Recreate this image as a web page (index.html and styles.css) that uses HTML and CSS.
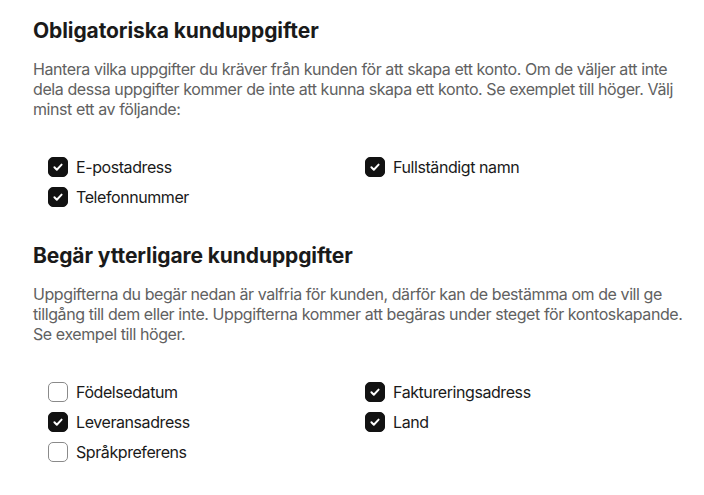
FILE: index.html
```html
<!DOCTYPE html>
<html lang="sv">
<head>
<meta charset="utf-8">
<link rel="stylesheet" href="styles.css">
</head>
<body>
<main class="page">
  <section class="section">
    <h2 class="title">Obligatoriska kunduppgifter</h2>
    <p class="desc">Hantera vilka uppgifter du kräver från kunden för att skapa ett konto. Om de väljer att inte dela dessa uppgifter kommer de inte att kunna skapa ett konto. Se exemplet till höger. Välj minst ett av följande:</p>
    <div class="options">
      <label class="option"><span class="box checked"><svg viewBox="0 0 20 20"><path d="M6 10.3l2.7 2.7 5.3-5.6"/></svg></span>E-postadress</label>
      <label class="option"><span class="box checked"><svg viewBox="0 0 20 20"><path d="M6 10.3l2.7 2.7 5.3-5.6"/></svg></span>Fullständigt namn</label>
      <label class="option"><span class="box checked"><svg viewBox="0 0 20 20"><path d="M6 10.3l2.7 2.7 5.3-5.6"/></svg></span>Telefonnummer</label>
    </div>
  </section>
  <section class="section">
    <h2 class="title">Begär ytterligare kunduppgifter</h2>
    <p class="desc">Uppgifterna du begär nedan är valfria för kunden, därför kan de bestämma om de vill ge tillgång till dem eller inte. Uppgifterna kommer att begäras under steget för kontoskapande. Se exempel till höger.</p>
    <div class="options">
      <label class="option"><span class="box"></span>Födelsedatum</label>
      <label class="option"><span class="box checked"><svg viewBox="0 0 20 20"><path d="M6 10.3l2.7 2.7 5.3-5.6"/></svg></span>Faktureringsadress</label>
      <label class="option"><span class="box checked"><svg viewBox="0 0 20 20"><path d="M6 10.3l2.7 2.7 5.3-5.6"/></svg></span>Leveransadress</label>
      <label class="option"><span class="box checked"><svg viewBox="0 0 20 20"><path d="M6 10.3l2.7 2.7 5.3-5.6"/></svg></span>Land</label>
      <label class="option"><span class="box"></span>Språkpreferens</label>
    </div>
  </section>
</main>
</body>
</html>
```

FILE: styles.css
```css
* { box-sizing: border-box; }
html, body { margin: 0; padding: 0; background: #ffffff; }
body {
  font-family: Inter, "Noto Sans", sans-serif;
  color: #1a1a1a;
}
.page {
  padding: 19px 6px 0 33px;
  display: flex;
  flex-direction: column;
  gap: 37px;
}
.title {
  margin: 0 0 16px;
  font-size: 21px;
  line-height: 24px;
  font-weight: 700;
  color: #1a1a1a;
  letter-spacing: -0.1px;
}
.desc {
  margin: 0 0 38px;
  font-size: 16px;
  line-height: 20px;
  color: #616161;
  letter-spacing: -0.42px;
}
.options {
  padding-left: 15px;
  display: grid;
  grid-template-columns: 317px 1fr;
  row-gap: 10px;
}
.option {
  display: flex;
  align-items: center;
  gap: 8px;
  font-size: 16px;
  line-height: 20px;
  color: #1a1a1a;
  letter-spacing: -0.42px;
}
.box {
  width: 20px;
  height: 20px;
  flex: none;
  border-radius: 5px;
  border: 1px solid #8a8a8a;
  background: #fff;
  display: flex;
  align-items: center;
  justify-content: center;
}
.box.checked {
  background: #121212;
  border-color: #121212;
}
.box svg {
  width: 20px;
  height: 20px;
  fill: none;
  stroke: #fff;
  stroke-width: 2.2;
  stroke-linecap: round;
  stroke-linejoin: round;
}
```
